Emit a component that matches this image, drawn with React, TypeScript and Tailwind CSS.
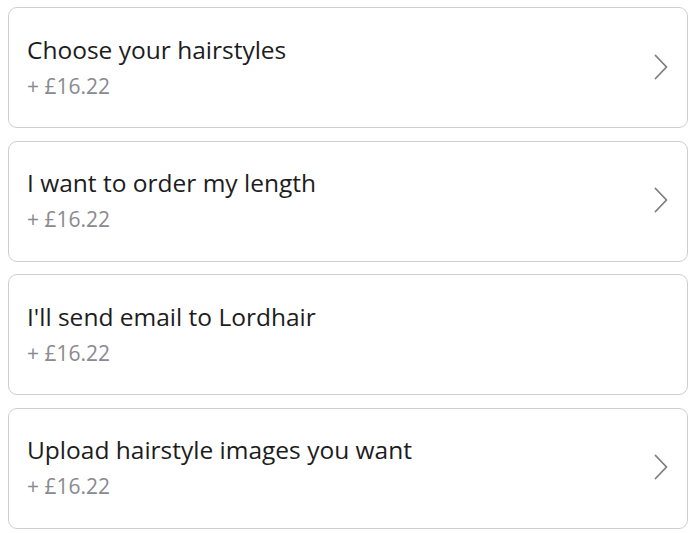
interface OptionCardProps {
	title: string
	price: string
	arrow?: boolean
}

const Chevron = () => (
	<svg width="14" height="26" viewBox="0 0 14 26" fill="none" className="text-[#7d7d82]">
		<polyline points="1.5,1.5 12.5,13 1.5,24.5" stroke="currentColor" strokeWidth="1.8" strokeLinecap="round" strokeLinejoin="round" />
	</svg>
)

const OptionCard = ({ title, price, arrow = true }: OptionCardProps) => (
	<div className="flex h-[121px] items-center justify-between rounded-[9px] border border-[#cfcfd3] bg-white pr-[19px] pb-[2px] pl-[18px]">
		<div className="flex flex-col">
			<span className="text-[24.5px] leading-[32px] text-[#1c1c21]">{title}</span>
			<span className="mt-[6px] text-[21px] leading-[28px] text-[#8a8a8f]">{price}</span>
		</div>
		{arrow && <Chevron />}
	</div>
)

export default function App() {
	return (
		<div
			className="flex min-h-screen flex-col gap-[12.6px] bg-white pt-[7px] pr-[6px] pl-[8px]"
			style={{ fontFamily: "'Open Sans', 'Noto Sans', sans-serif" }}
		>
			<OptionCard title="Choose your hairstyles" price="+ £16.22" />
			<OptionCard title="I want to order my length" price="+ £16.22" />
			<OptionCard title="I'll send email to Lordhair" price="+ £16.22" arrow={false} />
			<OptionCard title="Upload hairstyle images you want" price="+ £16.22" />
		</div>
	)
}
